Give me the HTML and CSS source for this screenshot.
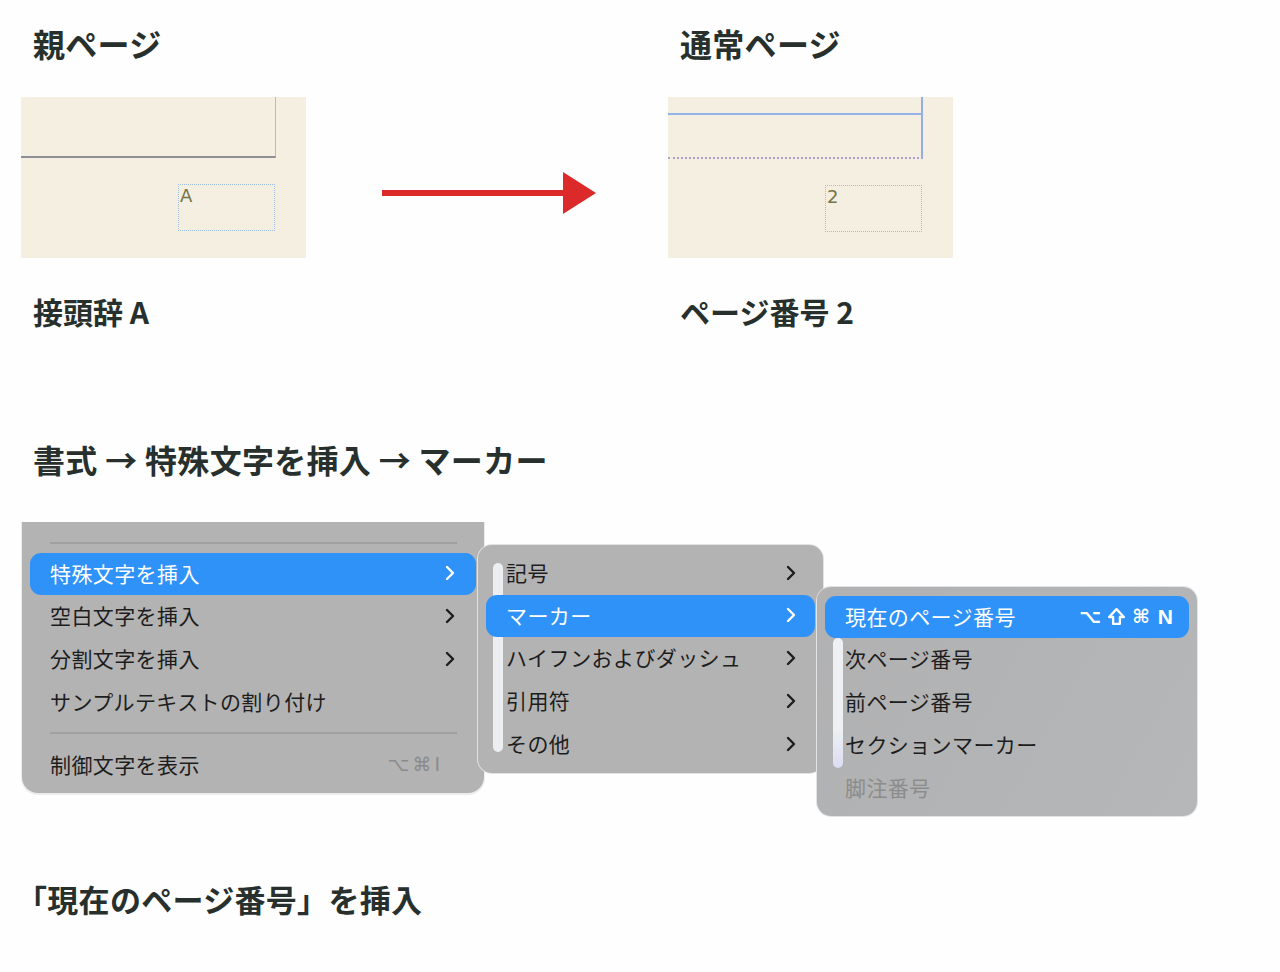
FILE: index.html
```html
<!DOCTYPE html>
<html lang="ja">
<head>
<meta charset="utf-8">
<link rel="stylesheet" href="styles.css">
</head>
<body>
<section class="compare">
  <div class="col">
    <h2 class="title">親ページ</h2>
    <div class="page">
      <div class="frame frame-a"></div>
      <div class="numbox numbox-a"><span>A</span></div>
    </div>
    <p class="label">接頭辞 A</p>
  </div>
  <div class="arrow">
    <svg width="214" height="44" viewBox="0 0 214 44"><rect x="0" y="18" width="182" height="6" fill="#dc2a2a"/><polygon points="181,0 214,21 181,42" fill="#dc2a2a"/></svg>
  </div>
  <div class="col">
    <h2 class="title">通常ページ</h2>
    <div class="page">
      <div class="frame frame-b"><div class="band"></div></div>
      <div class="numbox numbox-b"><span>2</span></div>
    </div>
    <p class="label">ページ番号 2</p>
  </div>
</section>

<h2 class="title path">書式 → 特殊文字を挿入 → マーカー</h2>

<section class="menus">
  <div class="menu menu1">
    <div class="sep sep-top"></div>
    <div class="row hl"><span>特殊文字を挿入</span><svg class="chev" viewBox="0 0 10 16"><path d="M2 2 L8 8 L2 14"/></svg></div>
    <div class="row"><span>空白文字を挿入</span><svg class="chev" viewBox="0 0 10 16"><path d="M2 2 L8 8 L2 14"/></svg></div>
    <div class="row"><span>分割文字を挿入</span><svg class="chev" viewBox="0 0 10 16"><path d="M2 2 L8 8 L2 14"/></svg></div>
    <div class="row"><span>サンプルテキストの割り付け</span></div>
    <div class="sep sep-mid"></div>
    <div class="row"><span>制御文字を表示</span><span class="key grey">⌥⌘I</span></div>
  </div>
  <div class="menu menu2">
    <div class="row"><span>記号</span><svg class="chev" viewBox="0 0 10 16"><path d="M2 2 L8 8 L2 14"/></svg></div>
    <div class="row hl"><span>マーカー</span><svg class="chev" viewBox="0 0 10 16"><path d="M2 2 L8 8 L2 14"/></svg></div>
    <div class="row"><span>ハイフンおよびダッシュ</span><svg class="chev" viewBox="0 0 10 16"><path d="M2 2 L8 8 L2 14"/></svg></div>
    <div class="row"><span>引用符</span><svg class="chev" viewBox="0 0 10 16"><path d="M2 2 L8 8 L2 14"/></svg></div>
    <div class="row"><span>その他</span><svg class="chev" viewBox="0 0 10 16"><path d="M2 2 L8 8 L2 14"/></svg></div>
  </div>
  <div class="menu menu3">
    <div class="row hl"><span>現在のページ番号</span><span class="key white"><span>⌥</span><svg class="shift" viewBox="0 0 18 18"><path d="M9 2 L16 9.5 H12.2 V16 H5.8 V9.5 H2 Z"/></svg><span>⌘</span><span class="n">N</span></span></div>
    <div class="row"><span>次ページ番号</span></div>
    <div class="row"><span>前ページ番号</span></div>
    <div class="row"><span>セクションマーカー</span></div>
    <div class="row disabled"><span>脚注番号</span></div>
  </div>
</section>

<h2 class="title final">「現在のページ番号」を挿入</h2>
</body>
</html>
```
FILE: styles.css
```css
* { box-sizing: border-box; }
body {
  margin: 0;
  background: #fefefe;
  font-family: "Noto Sans CJK JP", "Noto Sans", sans-serif;
  color: #27302c;
}
.title {
  margin: 0;
  font-size: 32px;
  font-weight: 700;
  line-height: 40px;
  letter-spacing: 0.3px;
  padding-left: 12px;
}
.compare {
  display: flex;
  align-items: flex-start;
  padding-top: 23px;
}
.col { width: 285px; }
.col:first-child { margin-left: 21px; }
.page {
  margin-top: 34px;
  width: 285px;
  height: 161px;
  background: #f4efe0;
  overflow: hidden;
}
.frame { width: 255px; height: 61px; }
.frame-a {
  border-right: 1px solid #b7b7df;
  border-bottom: 2px solid #8e8f96;
}
.frame-b {
  border-right: 2px solid #93aee6;
  border-bottom: 2px dotted #b0a0d0;
  height: 62px;
}
.frame-b .band {
  height: 18px;
  border-bottom: 2px solid #94b2ea;
}
.numbox {
  width: 97px;
  height: 47px;
  border: 1px dotted #9cbde6;
  margin-left: 157px;
  margin-top: 26px;
  font-family: "DejaVu Sans", sans-serif;
  font-size: 18px;
  line-height: 22px;
  color: #74764a;
  padding-left: 1px;
}
.frame-b + .numbox-b { margin-top: 26px; }
.label {
  margin: 33px 0 0;
  font-size: 30px;
  font-weight: 700;
  line-height: 40px;
  padding-left: 12px;
}
.arrow {
  margin-left: 76px;
  margin-right: 72px;
  margin-top: 149px;
  height: 44px;
}
.arrow svg { display: block; }
.path { margin-top: 108px; padding-left: 33px; }
.menus {
  display: flex;
  align-items: flex-start;
  margin-top: 43px;
  padding-left: 22px;
}
.menu {
  position: relative;
  background: #b3b3b3;
  border-radius: 14px;
  box-shadow: 0 0 0 1px #e2e3e6;
  font-size: 21px;
  letter-spacing: 0.4px;
  color: #1d1d1d;
}
.menu1 {
  width: 462px;
  height: 271px;
  border-radius: 0 0 16px 16px;
  padding: 20px 8px 0;
  box-shadow: 0 1px 0 1px #ececec;
}
.menu2 {
  width: 345px;
  height: 228px;
  margin-left: -6px;
  margin-top: 23px;
  padding: 7px 8px 0;
}
.menu3 {
  width: 380px;
  height: 229px;
  margin-left: -6px;
  margin-top: 65px;
  padding: 9px 8px 0;
  background: linear-gradient(120deg, #b1b1b2 0%, #b3b4b5 60%, #b6b7b8 100%);
}
.menu2::before, .menu3::before {
  content: "";
  position: absolute;
  width: 10px;
  border-radius: 5px;
  background: #eceef1;
}
.menu2::before { left: 15px; top: 18px; height: 189px; }
.menu3::before { left: 16px; top: 51px; height: 130px; background: linear-gradient(#eef0f3 70%, #dcdcf4); }
.sep {
  height: 2px;
  background: #a0a0a0;
  margin: 0 19px 0 20px;
}
.sep-top { margin-bottom: 9px; }
.sep-mid { margin-top: 8px; margin-bottom: 10px; }
.row {
  position: relative;
  z-index: 1;
  height: 43px;
  display: flex;
  align-items: center;
  justify-content: space-between;
  padding: 0 21px 2px 20px;
  border-radius: 11px;
  line-height: 1;
}
.menu2 .row { padding-right: 19px; }
.menu3 .row { padding-right: 16px; }
.row.hl {
  background: #2e92f8;
  color: #fff;
  height: 42px;
}
.chev {
  width: 10px;
  height: 16px;
  fill: none;
  stroke: #1d1d1d;
  stroke-width: 2.4;
  stroke-linecap: round;
  stroke-linejoin: round;
}
.hl .chev { stroke: #fff; }
.key {
  font-family: "DejaVu Sans", sans-serif;
  font-size: 19px;
  letter-spacing: 0;
}
.key.grey { color: #8b8b8b; letter-spacing: 3px; margin-right: 12px; }
.key.white {
  display: flex;
  align-items: center;
  gap: 6px;
  font-weight: 700;
}
.key.white .n { font-family: "Liberation Sans", sans-serif; font-size: 21px; margin-left: 2px; }
.shift {
  width: 19px;
  height: 19px;
  fill: none;
  stroke: #fff;
  stroke-width: 2.2;
  stroke-linejoin: round;
}
.disabled { color: #8c8c8c; }
.final {
  margin-top: 63px;
  padding-left: 16px;
  font-size: 31px;
}
```
